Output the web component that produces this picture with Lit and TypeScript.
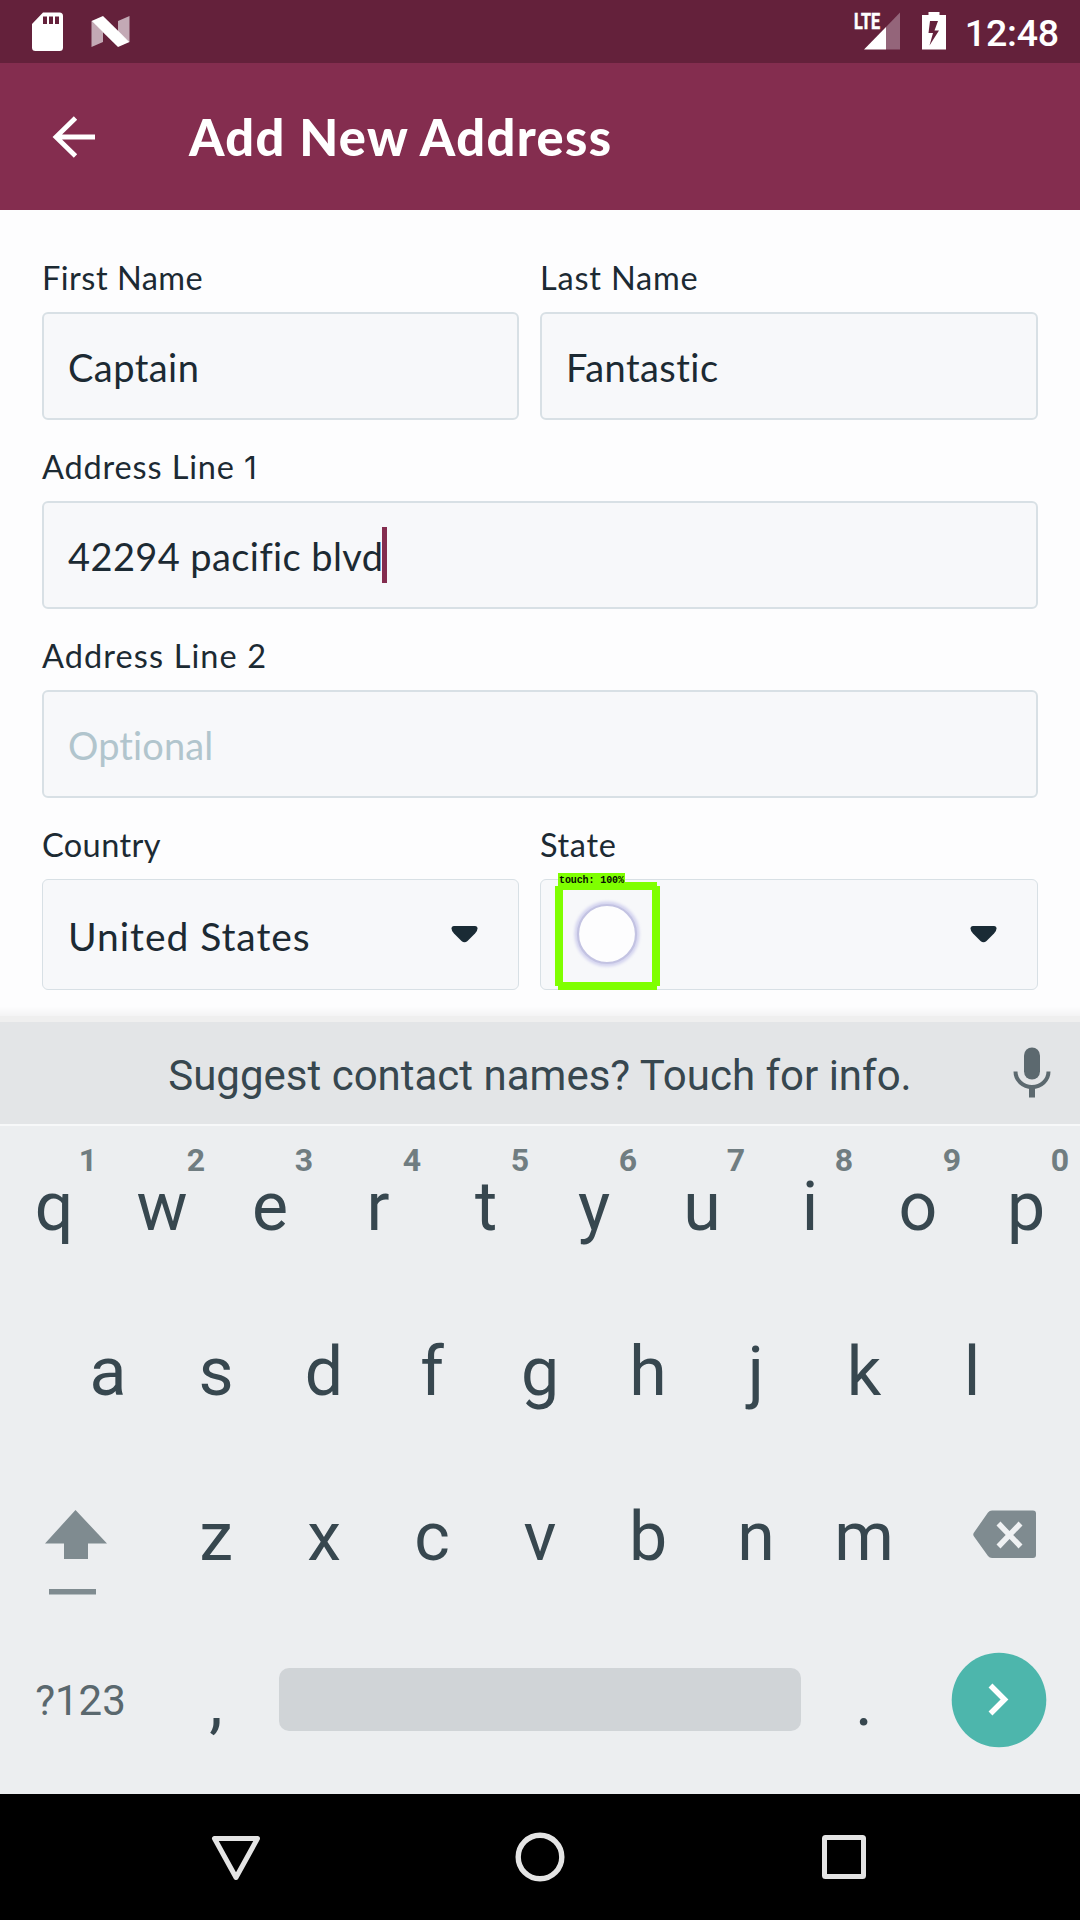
import { LitElement, html, css, nothing } from "lit";
import { customElement, property } from "lit/decorators.js";

@customElement("status-bar")
class StatusBar extends LitElement {
  static styles = css`
    :host { display: flex; height: 63px; background: #64213b; color: #fff; justify-content: space-between; }
    .group { display: flex; align-items: flex-start; }
    .time { font: 500 37.5px/44px Roboto, sans-serif; padding: 11px 21px 0 17px; letter-spacing: -0.2px; }
    svg { display: block; }
  `;
  render() {
    return html`
      <div class="group">
        <svg width="140" height="63" viewBox="0 0 140 63">
          <path fill="#fff" fill-rule="evenodd" d="M43 12.500H59.500a3.500 3.500 0 0 1 3.500 3.500V47.500a3.500 3.500 0 0 1-3.500 3.500H35.500a3.500 3.500 0 0 1-3.500-3.500V24ZM43 16.500V24H47V16.500ZM49 16.500V24H53V16.500ZM55 16.500V24H59V16.500Z"/>
          <path fill="#c3a9b5" d="M91.500 21L103 32V42L91.500 47ZM118 21L129.500 16V42L118 32Z"/>
          <path fill="#fff" d="M91.500 21L103 16L129.500 42L118 47Z"/>
        </svg>
      </div>
      <div class="group">
        <svg width="96" height="63" viewBox="852 0 96 63">
          <text x="854" y="29" fill="#fff" stroke="#fff" stroke-width="0.600" font-family="Roboto, sans-serif" font-weight="700" font-size="22" textLength="26" lengthAdjust="spacingAndGlyphs">LTE</text>
          <path fill="#94657a" d="M886 27L900 12.500V49.500H886Z"/>
          <path fill="#fff" d="M864 49.500L886 27V49.500Z"/>
          <path fill="#fff" fill-rule="evenodd" d="M928.500 12H939.500V15H946V49.500H922V15H928.500ZM930 21L928.500 33H933L929.500 45.500L939 30.500H934.500L938 21Z"/>
        </svg>
        <span class="time">12:48</span>
      </div>
    `;
  }
}

@customElement("form-field")
class FormField extends LitElement {
  @property() label = "";
  @property() suffix = "";
  @property() value = "";
  @property() placeholder = "";
  @property({ type: Number }) labelTracking = 0.8;
  @property({ type: Number }) tracking = 0.7;
  @property({ type: Boolean }) focused = false;
  @property({ type: Boolean }) select = false;
  @property({ type: Boolean }) touched = false;

  static styles = css`
    :host { display: block; font-family: Lato, sans-serif; color: #1c2a33; }
    .label { height: 54px; font-size: 32.5px; line-height: 40px; white-space: pre; }
    .numeral { font-family: Inter, sans-serif; font-size: 31.5px; line-height: 1; }
    .box {
      position: relative; box-sizing: border-box; height: 108px; border: 2px solid #d8e0e5; border-radius: 6px;
      background: #f7f8fa; display: flex; align-items: center; padding: 0 40px 0 24px; font-size: 38px; white-space: pre;
    }
    .text { padding-top: 2px; }
    .select { height: 111px; border-width: 1px; padding-left: 25px; padding-right: 40px; font-size: 39px; }
    .hint { color: #b1c5cd; }
    .caret { width: 5px; height: 56px; background: #842d4f; margin-left: -2px; }
    .arrow { margin-left: auto; display: block; }
    .touch { position: absolute; left: 14px; top: -8px; }
  `;
  render() {
    const labelStyle = `letter-spacing:${this.labelTracking}px`;
    const textStyle = `letter-spacing:${this.tracking}px`;
    return html`
      <div class="label" style=${labelStyle}>${this.label}${this.suffix ? html`<span class="numeral">${this.suffix}</span>` : nothing}</div>
      <div class="box ${this.select ? "select" : ""}">
        ${this.value ? html`<span class="text" style=${textStyle}>${this.value}</span>` : nothing}
        ${this.placeholder ? html`<span class="text hint" style=${textStyle}>${this.placeholder}</span>` : nothing}
        ${this.focused ? html`<span class="caret"></span>` : nothing}
        ${this.select
          ? html`<svg class="arrow" width="27" height="20" viewBox="0 0 27 20">
              <path fill="#1a2b35" d="M3 1H24Q26.500 1 26.500 3.500Q26.500 6 24 8.500L16.500 16Q13.500 18.500 10.500 16L3 8.500Q0.500 6 0.500 3.500Q0.500 1 3 1Z"/>
            </svg>`
          : nothing}
        ${this.touched
          ? html`<svg class="touch" width="106" height="119" viewBox="555 872 106 119">
              <defs><filter id="soft" x="-20%" y="-20%" width="140%" height="140%"><feGaussianBlur stdDeviation="1.600"/></filter></defs>
              <circle cx="607" cy="934" r="30" fill="none" stroke="#d3d3ef" stroke-width="5" filter="url(#soft)"/>
              <circle cx="607" cy="934" r="29" fill="#fdfdfe" stroke="#c3c3e2" stroke-width="2.200"/>
              <path fill="#7fff00" fill-rule="evenodd" d="M558 882H657V886H660V986H657V990H558V986H555V886H558ZM563 890V982H652V890Z"/>
              <rect x="558" y="873" width="67" height="11" fill="#7fff00"/>
              <text x="559" y="882.500" font-family="'Liberation Mono', monospace" font-weight="700" font-size="10" textLength="65" fill="#061000">touch: 100%</text>
            </svg>`
          : nothing}
      </div>
    `;
  }
}

@customElement("soft-keyboard")
class SoftKeyboard extends LitElement {
  static styles = css`
    :host { display: block; height: 778px; background: #eceef0; color: #37474f; font-family: Roboto, sans-serif; position: relative; }
    .shade { height: 6px; background: #efefef; }
    .glow { position: absolute; left: 0; right: 0; top: -10px; height: 10px; background: linear-gradient(rgba(0,0,0,0), rgba(0,0,0,0.04)); }
    .suggest { height: 102px; background: #e3e5e7; display: grid; grid-template-columns: 1fr; align-items: center; justify-items: center; font-size: 42px; position: relative; }
    .suggest span { padding-top: 5px; }
    .mic { position: absolute; right: 24px; top: 22px; }
    .keys { box-sizing: border-box; border-top: 2px solid #f7f8f9; }
    .row { display: flex; height: 165px; justify-content: center; }
    .row.first { height: 163px; }
    .key { width: 108px; position: relative; display: flex; align-items: center; justify-content: center; font-size: 68px; }
    .row.first .key { height: 161px; }
    .num { position: absolute; left: 68px; width: 40px; text-align: center; top: 15px; font-size: 32px; line-height: 38px; font-weight: 700; color: #707d81; }
    .wide { width: 162px; display: flex; align-items: center; justify-content: center; font-size: 42px; color: #5a686e; box-sizing: border-box; padding: 0 1px 2px 0; }
    .space { width: 522px; height: 63px; margin: 49px 9px 0; background: #d0d4d7; border-radius: 10px; }
    svg { display: block; }
  `;
  key(c: string, n?: string) {
    return html`<div class="key">${c}${n ? html`<span class="num">${n}</span>` : nothing}</div>`;
  }
  render() {
    return html`
      <div class="glow"></div>
      <div class="shade"></div>
      <div class="suggest">
        <span>Suggest contact names? Touch for info.</span>
        <svg class="mic" width="48" height="56" viewBox="1008 1044 48 56">
          <rect x="1024" y="1047.500" width="16" height="32" rx="8" fill="#5c696f"/>
          <path d="M1015.500 1071.500a16.500 15.500 0 0 0 33 0" fill="none" stroke="#5c696f" stroke-width="4"/>
          <rect x="1029" y="1087" width="6" height="10.500" fill="#5c696f"/>
        </svg>
      </div>
      <div class="keys">
        <div class="row first">${[..."qwertyuiop"].map((c, i) => this.key(c, "1234567890"[i]))}</div>
        <div class="row">${[..."asdfghjkl"].map((c) => this.key(c))}</div>
        <div class="row">
          <svg width="162" height="165" viewBox="0 1454 162 165" fill="#7f8b90">
            <path d="M75.500 1510L107 1543.500H88V1559H64V1543.500H45Z"/>
            <rect x="49" y="1589" width="47" height="5.500"/>
          </svg>
          ${[..."zxcvbnm"].map((c) => this.key(c))}
          <svg width="162" height="165" viewBox="918 1454 162 165">
            <path fill="#7f8b90" d="M992 1510.500H1033a3 3 0 0 1 3 3V1555a3 3 0 0 1-3 3H992Q989.500 1558 988 1556L974 1536.500Q972.500 1534.500 974 1532.500L988 1512.500Q989.500 1510.500 992 1510.500Z"/>
            <path d="M998.500 1523.500L1020.500 1546.500M1020.500 1523.500L998.500 1546.500" stroke="#eff1f3" stroke-width="5.500"/>
          </svg>
        </div>
        <div class="row">
          <div class="wide">?123</div>
          ${this.key(",")}
          <div class="space"></div>
          ${this.key(".")}
          <svg width="162" height="165" viewBox="918 1619 162 165">
            <circle cx="999" cy="1700" r="47.300" fill="#4db6ac"/>
            <path d="M990.500 1685.500L1004.500 1699.500L990.500 1713.500" fill="none" stroke="#fff" stroke-width="5.500"/>
          </svg>
        </div>
      </div>
    `;
  }
}

@customElement("app-root")
class AppRoot extends LitElement {
  static styles = css`
    :host { display: flex; flex-direction: column; width: 1080px; height: 1920px; background: #fdfdfe; overflow: hidden; }
    .bar { height: 147px; background: #842d4f; color: #fff; display: flex; align-items: center; padding-left: 50px; box-sizing: border-box; }
    .title { font: 900 50.5px/60px Lato, sans-serif; margin-left: 91px; letter-spacing: 1.4px; }
    .form { display: grid; grid-template-columns: 477px 498px; column-gap: 21px; row-gap: 27px; padding: 48px 42px 0; flex: 1; align-content: start; }
    .full { grid-column: 1 / -1; }
    .nav { height: 126px; background: #000; display: flex; justify-content: center; align-items: center; gap: 252px; }
  `;
  render() {
    return html`
      <status-bar></status-bar>
      <div class="bar">
        <svg width="48" height="48" viewBox="50 112.500 48 48">
          <path d="M95 136.500H56M75.500 117.500L56 136.500L75.500 155.500" fill="none" stroke="#fff" stroke-width="4.800"/>
        </svg>
        <span class="title">Add New Address</span>
      </div>
      <div class="form">
        <form-field label="First Name" .labelTracking=${0.5} value="Captain" .tracking=${0.45}></form-field>
        <form-field label="Last Name" .labelTracking=${0.8} value="Fantastic" .tracking=${0.45}></form-field>
        <form-field class="full" label="Address Line " suffix="1" .labelTracking=${0.85} value="42294 pacific blvd" .tracking=${0.4} focused></form-field>
        <form-field class="full" label="Address Line 2" .labelTracking=${1.1} placeholder="Optional" .tracking=${0.1}></form-field>
        <form-field label="Country" .labelTracking=${0.4} value="United States" .tracking=${0.95} select></form-field>
        <form-field label="State" .labelTracking=${0.65} select touched></form-field>
      </div>
      <soft-keyboard></soft-keyboard>
      <div class="nav">
        <svg width="52" height="52" viewBox="0 0 52 52"><path d="M4.500 7.500H47.500L26 46.500Z" fill="none" stroke="#e4e4e4" stroke-width="5" stroke-linejoin="round"/></svg>
        <svg width="52" height="52" viewBox="0 0 52 52"><circle cx="26" cy="26" r="21.800" fill="none" stroke="#e4e4e4" stroke-width="5.400"/></svg>
        <svg width="52" height="52" viewBox="0 0 52 52"><rect x="6.500" y="6.500" width="39" height="39" rx="1" fill="none" stroke="#e4e4e4" stroke-width="5" stroke-linejoin="round"/></svg>
      </div>
    `;
  }
}
